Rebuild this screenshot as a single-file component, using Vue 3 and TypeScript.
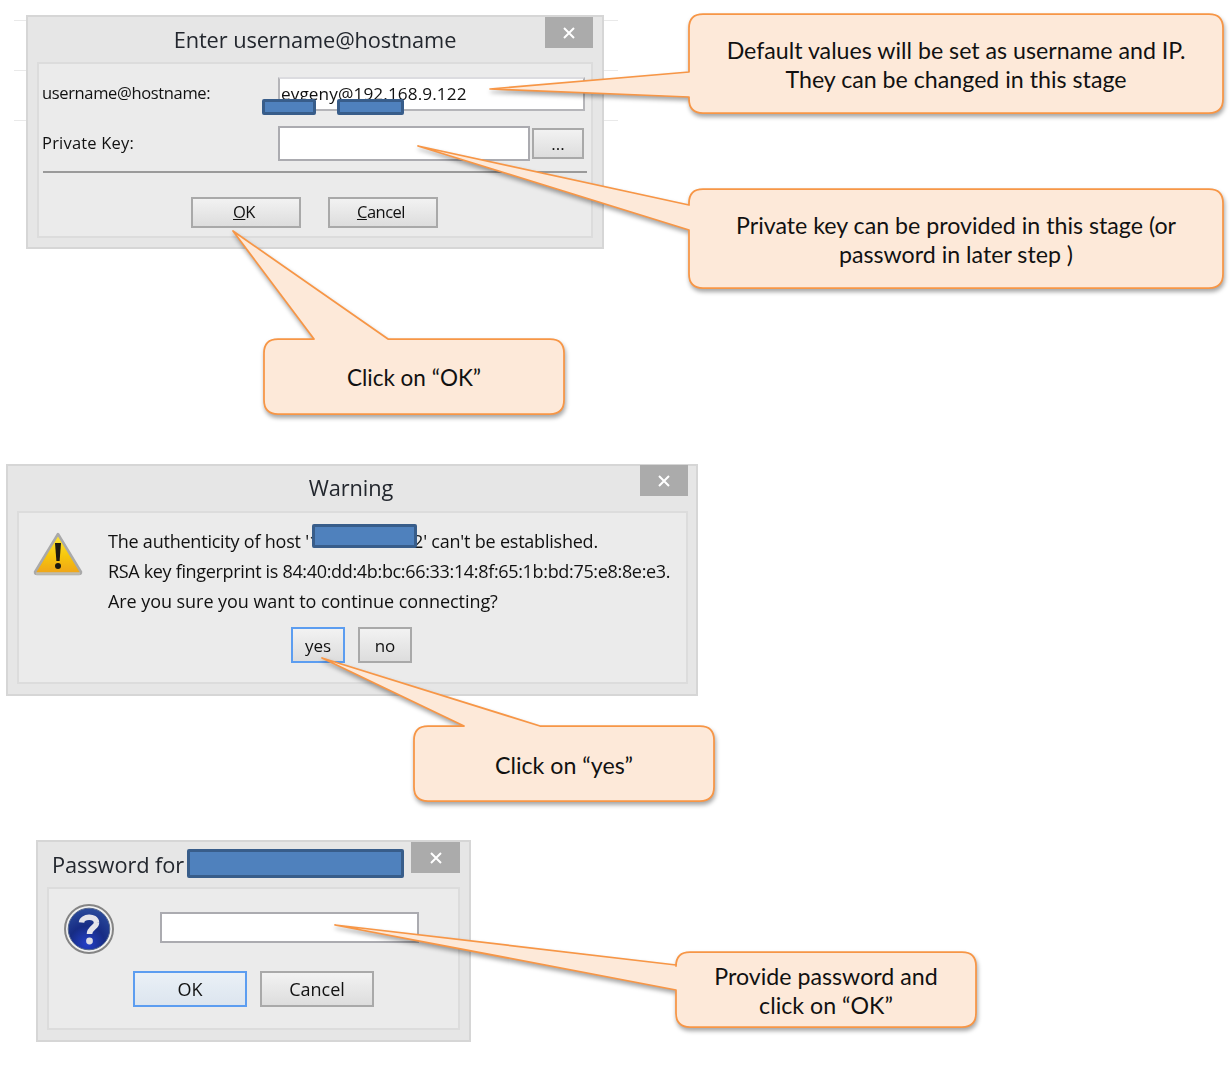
<script setup lang="ts">
interface Callout {
  x: number;
  y: number;
  w: number;
  h: number;
  tip: [number, number];
  side: "left" | "top";
  from: number;
  to: number;
  lines: string[];
  tight?: boolean;
}

const callouts: Callout[] = [
  {
    x: 689, y: 14, w: 534, h: 99, tip: [490, 89], side: "left", from: 72, to: 97,
    lines: ["Default values will be set as username and IP.", "They can be changed in this stage"],
  },
  {
    x: 689, y: 189, w: 534, h: 99, tip: [418, 146], side: "left", from: 205, to: 230,
    lines: ["Private key can be provided in this stage (or", "password in later step )"],
  },
  {
    x: 264, y: 339, w: 300, h: 75, tip: [233, 231], side: "top", from: 314, to: 388,
    lines: ["Click on “OK”"],
    tight: true,
  },
  {
    x: 414, y: 726, w: 300, h: 75, tip: [322, 658], side: "top", from: 464, to: 540,
    lines: ["Click on “yes”"],
  },
  {
    x: 676, y: 952, w: 300, h: 75, tip: [335, 925], side: "left", from: 965, to: 990,
    lines: ["Provide password and", "click on “OK”"],
  },
];

// rounded box with the pointer spliced into its top or left edge
function shape(c: Callout): string {
  const r = 14;
  const right = c.x + c.w;
  const bottom = c.y + c.h;
  const tail =
    c.side === "top"
      ? `L${c.from} ${c.y} L${c.tip[0]} ${c.tip[1]} L${c.to} ${c.y} `
      : "";
  const leftTail =
    c.side === "left"
      ? `L${c.x} ${c.to} L${c.tip[0]} ${c.tip[1]} L${c.x} ${c.from} `
      : "";
  return (
    `M${c.x + r} ${c.y} ${tail}L${right - r} ${c.y} Q${right} ${c.y} ${right} ${c.y + r} ` +
    `L${right} ${bottom - r} Q${right} ${bottom} ${right - r} ${bottom} ` +
    `L${c.x + r} ${bottom} Q${c.x} ${bottom} ${c.x} ${bottom - r} ` +
    `${leftTail}L${c.x} ${c.y + r} Q${c.x} ${c.y} ${c.x + r} ${c.y} Z`
  );
}

function boxStyle(c: Callout) {
  return {
    left: `${c.x}px`,
    top: `${c.y}px`,
    width: `${c.w}px`,
    height: `${c.h}px`,
  };
}
</script>

<template>
  <main class="sheet">
    <div class="rules">
      <div class="rule"></div>
      <div class="rule"></div>
      <div class="rule"></div>
    </div>

    <section class="dialog dialog-host">
      <header class="title">Enter username@hostname</header>
      <button class="close" type="button" aria-label="Close">
        <svg width="14" height="12" viewBox="0 0 14 12">
          <path d="M2 1 L12 11 M12 1 L2 11" stroke="#fff" stroke-width="2" />
        </svg>
      </button>
      <div class="panel host-panel">
        <div class="field-row">
          <label class="field-label">username@hostname:</label>
          <div class="input host-input">evgeny@192.168.9.122</div>
        </div>
        <div class="field-row">
          <label class="field-label key-label">Private Key:</label>
          <div class="input key-input"></div>
          <button class="btn browse" type="button">...</button>
        </div>
        <div class="separator"></div>
        <div class="actions host-actions">
          <button class="btn wide" type="button"><u>O</u>K</button>
          <button class="btn wide" type="button"><u>C</u>ancel</button>
        </div>
      </div>
      <div class="mask mask-user"></div>
      <div class="mask mask-host"></div>
    </section>

    <section class="dialog dialog-warning">
      <header class="title">Warning</header>
      <button class="close" type="button" aria-label="Close">
        <svg width="14" height="12" viewBox="0 0 14 12">
          <path d="M2 1 L12 11 M12 1 L2 11" stroke="#fff" stroke-width="2" />
        </svg>
      </button>
      <div class="panel warning-panel">
        <div class="warning-body">
          <svg class="warning-icon" width="50" height="44" viewBox="0 0 50 44">
            <defs>
              <linearGradient id="amber" x1="0" y1="0" x2="0" y2="1">
                <stop offset="0" stop-color="#ffe83a" />
                <stop offset="0.55" stop-color="#f6c60c" />
                <stop offset="1" stop-color="#efa31a" />
              </linearGradient>
            </defs>
            <path d="M25 2 L48 40 Q48 42 46 42 L4 42 Q2 42 2 40 Z" fill="url(#amber)" stroke="#a9a9a9" stroke-width="2.5" stroke-linejoin="round" />
            <path d="M3 41.5 H47" stroke="#c0bcae" stroke-width="2.5" />
            <path d="M22 11 H28 L26.600 29 H23.400 Z" fill="#1d1a10" />
            <circle cx="25" cy="34" r="3" fill="#1d1a10" />
          </svg>
          <div class="warning-text">
            <p class="line-host">The authenticity of host '192.168.9.122' can't be established.</p>
            <p class="line-key">RSA key fingerprint is 84:40:dd:4b:bc:66:33:14:8f:65:1b:bd:75:e8:8e:e3.</p>
            <p class="line-ask">Are you sure you want to continue connecting?</p>
          </div>
        </div>
        <div class="actions warning-actions">
          <button class="btn small focus" type="button">yes</button>
          <button class="btn small" type="button">no</button>
        </div>
      </div>
      <div class="mask mask-warning"></div>
    </section>

    <section class="dialog dialog-password">
      <header class="title title-left">Password for</header>
      <button class="close" type="button" aria-label="Close">
        <svg width="14" height="12" viewBox="0 0 14 12">
          <path d="M2 1 L12 11 M12 1 L2 11" stroke="#fff" stroke-width="2" />
        </svg>
      </button>
      <div class="panel password-panel">
        <div class="password-row">
          <svg class="question-icon" width="50" height="50" viewBox="0 0 50 50">
            <defs>
              <radialGradient id="orb" cx="0.45" cy="0.85" r="0.85">
                <stop offset="0" stop-color="#2340c8" />
                <stop offset="0.5" stop-color="#172c84" />
                <stop offset="1" stop-color="#2b4b9c" />
              </radialGradient>
            </defs>
            <circle cx="25" cy="25" r="24" fill="#f2f2f2" stroke="#858585" stroke-width="2" />
            <circle cx="25" cy="25" r="20.800" fill="url(#orb)" stroke="#55688f" stroke-width="1" />
            <path d="M17.500 18.500 C18 12 32 11 32.500 18.500 C33 23 25.500 24 25.500 30" fill="none" stroke="#e4e4ea" stroke-width="5.500" />
            <circle cx="25.500" cy="37" r="3.400" fill="#dcdce4" />
          </svg>
          <div class="input password-input"></div>
        </div>
        <div class="actions password-actions">
          <button class="btn large primary" type="button">OK</button>
          <button class="btn large" type="button">Cancel</button>
        </div>
      </div>
      <div class="mask mask-password"></div>
    </section>

    <svg class="callout-layer" width="1232" height="1069" viewBox="0 0 1232 1069">
      <path v-for="c in callouts" :key="c.x + c.y" class="callout-shape" :d="shape(c)" />
    </svg>
    <div
      v-for="c in callouts"
      :key="c.lines[0]"
      class="callout-text"
      :class="{ tight: c.tight }"
      :style="boxStyle(c)"
    >
      <span v-for="line in c.lines" :key="line">{{ line }}</span>
    </div>
  </main>
</template>

<style scoped>
.sheet {
  position: relative;
  width: 1232px;
  height: 1069px;
  overflow: hidden;
  background: #fff;
  font-family: "Open Sans", "Noto Sans", sans-serif;
  color: #111;
}

.rules {
  position: absolute;
  left: 14px;
  top: 20px;
  width: 604px;
}

.rule {
  height: 50px;
  box-sizing: border-box;
  border-top: 1px solid #e9e9e9;
}

/* the dialogs are screenshots pasted on a slide, so they sit free on the canvas */
.dialog {
  position: absolute;
  box-sizing: border-box;
  display: flex;
  flex-direction: column;
  background: #e6e6e6;
  border: 2px solid #d6d6d6;
  filter: blur(0.3px);
}

.dialog-host {
  left: 26px;
  top: 15px;
  width: 578px;
  height: 234px;
  padding: 0 9px 9px;
}

.dialog-warning {
  left: 6px;
  top: 464px;
  width: 692px;
  height: 232px;
  padding: 0 8px 10px 9px;
}

.dialog-password {
  left: 36px;
  top: 840px;
  width: 435px;
  height: 202px;
  padding: 0 9px 10px;
}

.title {
  flex: none;
  height: 45px;
  line-height: 46px;
  text-align: center;
  font-size: 21.800px;
  color: #23272e;
  letter-spacing: -0.1px;
}

.dialog-warning .title {
  line-height: 44px;
  padding-right: 3px;
}

.title-left {
  text-align: left;
  padding-left: 5px;
}

.close {
  position: absolute;
  top: 0;
  right: 9px;
  width: 48px;
  height: 31px;
  padding: 0;
  border: 0;
  background: #ababab;
  display: flex;
  align-items: center;
  justify-content: center;
}

.dialog-warning .close {
  top: -1px;
  right: 8px;
}

.dialog-password .close {
  width: 49px;
}

.panel {
  flex: 1;
  min-height: 0;
  box-sizing: border-box;
  background: #ebebeb;
  border: 2px solid #dcdcdc;
}

.host-panel {
  display: flex;
  flex-direction: column;
  padding: 13px 5px 0 3px;
  gap: 15px;
}

.field-row {
  display: flex;
  align-items: center;
  height: 34px;
}

.field-label {
  flex: none;
  width: 236px;
  padding-bottom: 3px;
  font-size: 16.500px;
  letter-spacing: -0.35px;
}

.key-label {
  padding-bottom: 2px;
  letter-spacing: 0.2px;
}

.input {
  box-sizing: border-box;
  background: #fff;
  border: 2px solid #ababb0;
}

.host-input {
  width: 307px;
  height: 34px;
  line-height: 30px;
  padding-left: 1px;
  font-size: 17.200px;
  letter-spacing: 0.1px;
  border-color: #dcdce0 #b5b5b9 #b5b5b9 #b5b5b9;
}

.key-input {
  width: 252px;
  height: 35px;
}

.btn {
  box-sizing: border-box;
  padding: 0;
  border: 2px solid #a9a9a9;
  background: linear-gradient(#f2f2f2, #dddddd);
  font-family: inherit;
  color: #111;
}

.browse {
  width: 52px;
  height: 31px;
  margin-left: 2px;
  font-size: 17px;
  line-height: 27px;
}

.separator {
  height: 2px;
  margin: -4px 0 0 1px;
  width: 544px;
  background: #9a9a9a;
}

.actions {
  display: flex;
  justify-content: center;
}

.host-actions {
  gap: 27px;
  margin-top: 9px;
}

.wide {
  width: 110px;
  height: 31px;
  padding: 0 3px 2px 0;
  font-size: 16.500px;
  letter-spacing: -0.5px;
}

.warning-panel {
  display: flex;
  flex-direction: column;
}

.warning-body {
  display: flex;
  padding: 13px 0 0 14px;
}

.warning-icon {
  flex: none;
  margin-top: 6px;
}

.warning-text {
  margin-left: 25px;
  font-size: 18px;
  line-height: 30px;
  white-space: nowrap;
}

.warning-text p {
  margin: 0;
}

.line-host {
  letter-spacing: -0.22px;
}

.line-key {
  letter-spacing: -0.33px;
}

.line-ask {
  letter-spacing: -0.06px;
}

.warning-actions {
  gap: 13px;
  margin-top: 11px;
  padding-right: 2px;
}

.small {
  width: 54px;
  height: 36px;
  font-size: 17px;
}

.focus {
  border-color: #5c9df0;
}

.password-panel {
  display: flex;
  flex-direction: column;
}

.password-row {
  display: flex;
  padding: 15px 0 0 15px;
}

.question-icon {
  flex: none;
}

.password-input {
  width: 259px;
  height: 31px;
  margin: 8px 0 0 46px;
}

.password-actions {
  gap: 13px;
  margin-top: 17px;
}

.large {
  width: 114px;
  height: 36px;
  font-size: 18px;
}

.primary {
  border-color: #5c9df0;
  background: linear-gradient(#eaf0f6, #dce5ef);
}

.mask {
  position: absolute;
  box-sizing: border-box;
  background: #4f81bd;
  border: 3px solid #385d8a;
  border-radius: 2px;
}

.mask-user {
  left: 234px;
  top: 82px;
  width: 54px;
  height: 16px;
}

.mask-host {
  left: 309px;
  top: 82px;
  width: 67px;
  height: 16px;
}

.mask-warning {
  left: 304px;
  top: 58px;
  width: 105px;
  height: 24px;
}

.mask-password {
  left: 149px;
  top: 7px;
  width: 217px;
  height: 29px;
}

.callout-layer {
  position: absolute;
  left: 0;
  top: 0;
}

.callout-shape {
  fill: #fde9d9;
  stroke: #f79646;
  stroke-width: 1.750;
  stroke-linejoin: round;
  filter: drop-shadow(1px 3px 2px rgba(0, 0, 0, 0.35));
}

.callout-text {
  position: absolute;
  box-sizing: border-box;
  padding-top: 3px;
  display: flex;
  flex-direction: column;
  align-items: center;
  justify-content: center;
  font-family: Lato, "Open Sans", sans-serif;
  font-size: 23.200px;
  line-height: 29px;
  color: #111;
}

.callout-text.tight {
  font-size: 22.500px;
  padding-top: 2px;
}
</style>
